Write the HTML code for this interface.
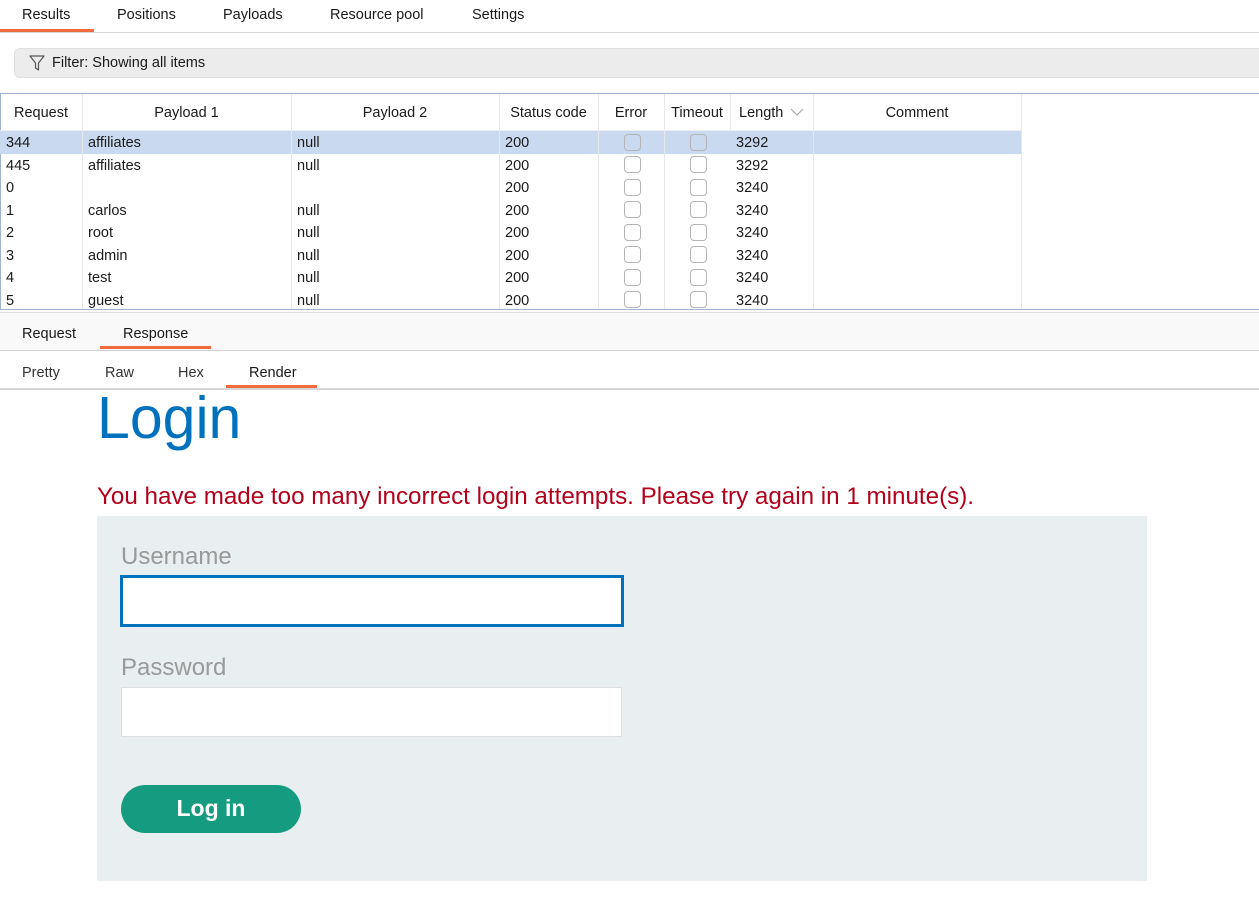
<!DOCTYPE html>
<html><head><meta charset="utf-8"><style>
*{margin:0;padding:0;box-sizing:border-box}
body{width:1259px;height:902px;overflow:hidden;background:#fff;font-family:"Liberation Sans",sans-serif;font-size:14px;color:#1a1a1a;position:relative}
.a{position:absolute;white-space:nowrap}
.tab{position:absolute;top:7px;font-size:14.5px}
.hdr{position:absolute;top:95px;height:37px;line-height:37px;text-align:center;font-size:14.5px}
.vl{position:absolute;width:1px;background:#e8e8e8}
.row{position:absolute;left:0;height:22.5px;line-height:24px;font-size:14.5px}
.cb{position:absolute;width:17px;height:17px;border:1px solid #b5b5b5;border-radius:4px;background:#fff}
</style></head><body>
<div class="a" style="left:0;top:0;width:1259px;height:32px;background:#fff"></div>
<div class="tab" style="left:22px">Results</div>
<div class="tab" style="left:117px">Positions</div>
<div class="tab" style="left:223px">Payloads</div>
<div class="tab" style="left:330px">Resource pool</div>
<div class="tab" style="left:472px">Settings</div>
<div class="a" style="left:0;top:29px;width:94px;height:3px;background:#f26b3a"></div>
<div class="a" style="left:0;top:32px;width:1259px;height:1px;background:#d6d6d6"></div>
<div class="a" style="left:14px;top:48px;width:1260px;height:30px;background:#ececec;border:1px solid #e0e0e0;border-radius:6px"></div>
<svg class="a" style="left:29px;top:54px" width="16" height="18" viewBox="0 0 16 18"><path d="M1 2H15L9.5 9V16L6.5 14V9Z" fill="none" stroke="#555" stroke-width="1.2" stroke-linejoin="round"/></svg>
<div class="a" style="left:52px;top:55px;font-size:14.5px">Filter: Showing all items</div>
<div class="a" style="left:0;top:93px;width:1259px;height:1px;background:#9db5d5"></div>
<div class="a" style="left:0;top:93px;width:1px;height:217px;background:#9db5d5"></div>
<div class="a" style="left:0;top:131px;width:1021px;height:22.5px;background:#c9d9ef"></div>
<div class="vl" style="left:82px;top:94px;height:215px"></div>
<div class="vl" style="left:291px;top:94px;height:215px"></div>
<div class="vl" style="left:499px;top:94px;height:215px"></div>
<div class="vl" style="left:598px;top:94px;height:215px"></div>
<div class="vl" style="left:664px;top:94px;height:215px"></div>
<div class="vl" style="left:730px;top:94px;height:37px"></div>
<div class="vl" style="left:813px;top:94px;height:215px"></div>
<div class="vl" style="left:1021px;top:94px;height:215px"></div>
<div class="a" style="left:0;top:130px;width:1021px;height:1px;background:#eee"></div>
<div class="hdr" style="left:0;width:82px">Request</div>
<div class="hdr" style="left:82px;width:209px">Payload 1</div>
<div class="hdr" style="left:291px;width:208px">Payload 2</div>
<div class="hdr" style="left:499px;width:99px">Status code</div>
<div class="hdr" style="left:598px;width:66px">Error</div>
<div class="hdr" style="left:664px;width:66px">Timeout</div>
<div class="hdr" style="left:739px;text-align:left">Length</div>
<svg class="a" style="left:790px;top:107px" width="14" height="10"><path d="M1 2L7 8L13 2" fill="none" stroke="#aaa" stroke-width="1.2"/></svg>
<div class="hdr" style="left:813px;width:208px">Comment</div>

<div class="row" style="top:131px"><span class="a" style="left:6px">344</span><span class="a" style="left:88px">affiliates</span><span class="a" style="left:297px">null</span><span class="a" style="left:505px">200</span><span class="a" style="left:736px">3292</span></div>
<div class="row" style="top:153.5px"><span class="a" style="left:6px">445</span><span class="a" style="left:88px">affiliates</span><span class="a" style="left:297px">null</span><span class="a" style="left:505px">200</span><span class="a" style="left:736px">3292</span></div>
<div class="row" style="top:176px"><span class="a" style="left:6px">0</span><span class="a" style="left:505px">200</span><span class="a" style="left:736px">3240</span></div>
<div class="row" style="top:198.5px"><span class="a" style="left:6px">1</span><span class="a" style="left:88px">carlos</span><span class="a" style="left:297px">null</span><span class="a" style="left:505px">200</span><span class="a" style="left:736px">3240</span></div>
<div class="row" style="top:221px"><span class="a" style="left:6px">2</span><span class="a" style="left:88px">root</span><span class="a" style="left:297px">null</span><span class="a" style="left:505px">200</span><span class="a" style="left:736px">3240</span></div>
<div class="row" style="top:243.5px"><span class="a" style="left:6px">3</span><span class="a" style="left:88px">admin</span><span class="a" style="left:297px">null</span><span class="a" style="left:505px">200</span><span class="a" style="left:736px">3240</span></div>
<div class="row" style="top:266px"><span class="a" style="left:6px">4</span><span class="a" style="left:88px">test</span><span class="a" style="left:297px">null</span><span class="a" style="left:505px">200</span><span class="a" style="left:736px">3240</span></div>
<div class="row" style="top:288.5px"><span class="a" style="left:6px">5</span><span class="a" style="left:88px">guest</span><span class="a" style="left:297px">null</span><span class="a" style="left:505px">200</span><span class="a" style="left:736px">3240</span></div>

<div class="cb" style="left:624px;top:134px;background:#c9d9ef"></div><div class="cb" style="left:690px;top:134px;background:#c9d9ef"></div>
<div class="cb" style="left:624px;top:156px"></div><div class="cb" style="left:690px;top:156px"></div>
<div class="cb" style="left:624px;top:179px"></div><div class="cb" style="left:690px;top:179px"></div>
<div class="cb" style="left:624px;top:201px"></div><div class="cb" style="left:690px;top:201px"></div>
<div class="cb" style="left:624px;top:224px"></div><div class="cb" style="left:690px;top:224px"></div>
<div class="cb" style="left:624px;top:246px"></div><div class="cb" style="left:690px;top:246px"></div>
<div class="cb" style="left:624px;top:269px"></div><div class="cb" style="left:690px;top:269px"></div>
<div class="cb" style="left:624px;top:291px"></div><div class="cb" style="left:690px;top:291px"></div>

<div class="a" style="left:0;top:309px;width:1259px;height:1px;background:#9db5d5"></div>
<div class="a" style="left:0;top:312px;width:1259px;height:38px;background:#f9f9f9;border-top:1px solid #ddd"></div>
<div class="a" style="left:22px;top:326px;font-size:14.5px">Request</div>
<div class="a" style="left:123px;top:326px;font-size:14.5px">Response</div>
<div class="a" style="left:100px;top:346px;width:111px;height:3px;background:#f26b3a"></div>
<div class="a" style="left:0;top:350px;width:1259px;height:1px;background:#d0d0d0"></div>
<div class="a" style="left:22px;top:365px;color:#333;font-size:14.5px">Pretty</div>
<div class="a" style="left:105px;top:365px;color:#333;font-size:14.5px">Raw</div>
<div class="a" style="left:178px;top:365px;color:#333;font-size:14.5px">Hex</div>
<div class="a" style="left:249px;top:365px;font-size:14.5px">Render</div>
<div class="a" style="left:226px;top:385px;width:91px;height:3px;background:#f26b3a"></div>
<div class="a" style="left:0;top:388px;width:1259px;height:2px;background:#d6d6d6"></div>
<div class="a" style="left:97px;top:384px;font-size:59px;color:#0071bc">Login</div>
<div class="a" style="left:97px;top:483px;font-size:24.2px;color:#b3001b">You have made too many incorrect login attempts. Please try again in 1 minute(s).</div>
<div class="a" style="left:97px;top:516px;width:1050px;height:365px;background:#e9eef1"></div>
<div class="a" style="left:121px;top:543px;font-size:24px;color:#999">Username</div>
<div class="a" style="left:120px;top:575px;width:504px;height:52px;background:#fff;border:3px solid #0071bc"></div>
<div class="a" style="left:121px;top:654px;font-size:24px;color:#999">Password</div>
<div class="a" style="left:121px;top:687px;width:501px;height:50px;background:#fff;border:1px solid #ddd"></div>
<div class="a" style="left:121px;top:785px;width:180px;height:48px;background:#159c80;border-radius:24px;color:#fff;font-weight:bold;font-size:23px;text-align:center;line-height:46px">Log in</div>
</body></html>
